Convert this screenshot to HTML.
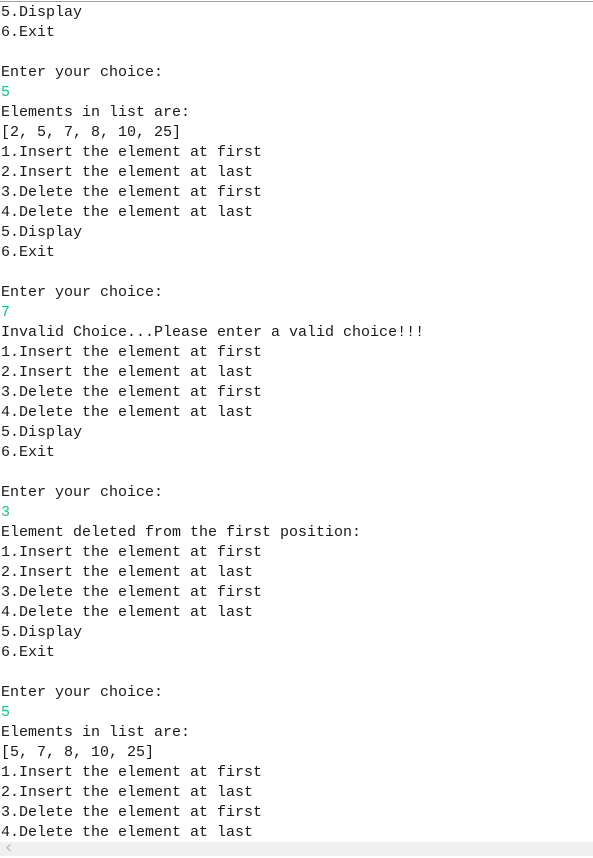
<!DOCTYPE html>
<html><head><style>
html,body{margin:0;padding:0;background:#fff;width:593px;height:856px;overflow:hidden}
.top{position:absolute;left:0;top:1px;width:593px;height:1px;background:#a0a0a0}
pre{position:absolute;left:1px;top:3px;margin:0;font-family:"Liberation Mono",monospace;font-size:15px;line-height:20px;color:#1a1a1a}
.g{color:#14c38e}
.sb{position:absolute;left:0;top:842px;width:593px;height:14px;background:#f0f0f0}
.sb span{position:absolute;left:5px;top:-5px;font-family:"DejaVu Sans",sans-serif;font-size:18px;color:#b8b8b8}
</style></head><body>
<div class="top"></div>
<pre>5.Display
6.Exit

Enter your choice:
<span class="g">5</span>
Elements in list are:
[2, 5, 7, 8, 10, 25]
1.Insert the element at first
2.Insert the element at last
3.Delete the element at first
4.Delete the element at last
5.Display
6.Exit

Enter your choice:
<span class="g">7</span>
Invalid Choice...Please enter a valid choice!!!
1.Insert the element at first
2.Insert the element at last
3.Delete the element at first
4.Delete the element at last
5.Display
6.Exit

Enter your choice:
<span class="g">3</span>
Element deleted from the first position:
1.Insert the element at first
2.Insert the element at last
3.Delete the element at first
4.Delete the element at last
5.Display
6.Exit

Enter your choice:
<span class="g">5</span>
Elements in list are:
[5, 7, 8, 10, 25]
1.Insert the element at first
2.Insert the element at last
3.Delete the element at first
4.Delete the element at last</pre>
<div class="sb"><span>&#8249;</span></div>
</body></html>
